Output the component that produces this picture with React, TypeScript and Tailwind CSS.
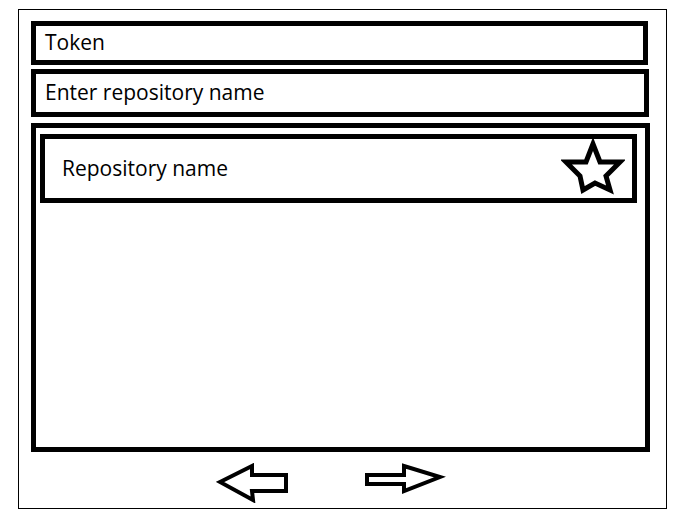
import React from 'react'

const LeftArrow = () => (
  <svg width="74" height="40" viewBox="0 0 74 40" fill="none">
    <polygon
      points="4,19 36,3 36,12 70,12 70,28 36,28 37,37"
      stroke="black"
      strokeWidth="4"
      strokeLinejoin="miter"
      fill="white"
    />
  </svg>
)

const RightArrow = () => (
  <svg width="84" height="34" viewBox="0 0 84 34" fill="none">
    <polygon
      points="5,12 42,12 42,3 78,14 42,28 42,21 5,21"
      stroke="black"
      strokeWidth="4"
      strokeLinejoin="miter"
      fill="white"
    />
  </svg>
)

const Star = () => (
  <svg width="64" height="60" viewBox="561 140 64 60" fill="none">
    <polygon
      points="593,145 586,163 566,163 580,177 583,191 595,184 610,191 606,177 620,163 600,163"
      stroke="black"
      strokeWidth="5"
      strokeLinejoin="miter"
      fill="white"
    />
  </svg>
)

export default function App() {
  return (
    <div className="w-[682px] h-[514px] bg-white pt-[9px] pl-[18px]" style={{ fontFamily: '"Open Sans", "Noto Sans", sans-serif' }}>
      <div className="w-[649px] h-[500px] border border-black flex flex-col pl-[12px] pt-[11px]">
        {/* Token */}
        <div className="w-[617px] h-[44px] border-[5px] border-black flex items-center pl-[9px] text-[21px] text-black">
          Token
        </div>

        {/* Search */}
        <div className="mt-[4px] w-[618px] h-[48px] border-[5px] border-black flex items-center pl-[9px] text-[21px] text-black">
          Enter repository name
        </div>

        {/* Repository list */}
        <div className="mt-[6px] w-[619px] h-[329px] border-[5px] border-black pl-[4px] pt-[6px]">
          <div className="w-[597px] h-[69px] border-[5px] border-black flex items-center justify-between pl-[17px] pr-[7px] text-[21px] text-black">
            <span>Repository name</span>
            <Star />
          </div>
        </div>

        {/* Paging */}
        <div className="mt-[11px] flex items-start pl-[185px]">
          <LeftArrow />
          <div className="ml-[72px]">
            <RightArrow />
          </div>
        </div>
      </div>
    </div>
  )
}
